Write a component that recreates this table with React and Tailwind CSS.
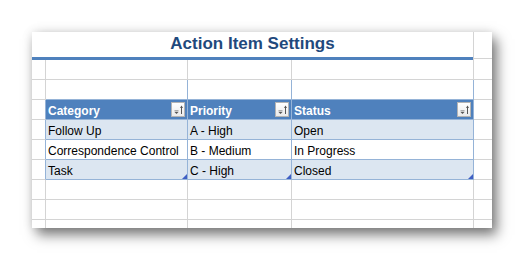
import React from "react";

const GRID = "border-[#d4d4d4]";
const TBL = "border-[#95b3d7]";

// column widths incl. right border: A, B, C, D, E
const COLS = ["w-[14px]", "w-[142px]", "w-[104px]", "w-[182px]", "w-[18px]"];

function SortButton() {
  return (
    <div className="absolute right-[2px] top-[2px] w-[14px] h-[15px] border border-[#b4b4b4] bg-gradient-to-b from-white to-[#ebebeb] flex items-center justify-center">
      <svg width="12" height="13" viewBox="0 0 12 13">
        <rect x="2.5" y="7.5" width="4" height="0.8" fill="#666" />
        <polygon points="2.5,9 6.5,9 4.5,11" fill="#555" />
        <line x1="9.5" y1="3.5" x2="9.5" y2="11" stroke="#555" strokeWidth="1" />
        <polygon points="8,5 11,5 9.5,2.5" fill="#555" />
      </svg>
    </div>
  );
}

function Handle() {
  return (
    <svg className="absolute right-0 bottom-0" width="5" height="5" viewBox="0 0 5 5">
      <polygon points="5,0 5,5 0,5" fill="#3f5fc4" />
    </svg>
  );
}

function BlankRow({ blueBottom = false, last = false }) {
  return (
    <div className={`flex ${last ? "h-[8px]" : "h-[20px]"}`}>
      {COLS.map((w, i) => (
        <div
          key={i}
          className={`${w} ${i < 4 ? "border-r" : ""} ${last ? "" : "border-b"} ${
            blueBottom && i > 0 && i < 4 ? TBL : GRID
          }`}
        />
      ))}
    </div>
  );
}

const rows = [
  ["Follow Up", "A - High", "Open"],
  ["Correspondence Control", "B - Medium", "In Progress"],
  ["Task", "C - High", "Closed"],
];

export default function App() {
  return (
    <div className="min-h-screen bg-white pt-[32px] pl-[32px]">
      <div className="w-[460px] h-[196px] bg-white overflow-hidden flex flex-col font-['Liberation_Sans',Arial,sans-serif] shadow-[5px_7px_12px_rgba(0,0,0,0.5),0_0_10px_rgba(0,0,0,0.12)]">
        {/* title row */}
        <div className="flex h-[25px]">
          <div className="w-[442px] border-r border-[#d4d4d4] flex items-end justify-center">
            <span className="text-[17px] font-bold text-[#1f497d] leading-none pb-[5px]">
              Action Item Settings
            </span>
          </div>
          <div className="w-[18px]" />
        </div>
        {/* thick blue rule */}
        <div className="flex h-[3px]">
          <div className="w-[441px] bg-[#4f81bd]" />
          <div className="w-[1px] bg-[#d4d4d4]" />
          <div className="w-[18px] flex flex-col">
            <div className="h-[1px]" />
            <div className="h-[1px] bg-[#d4d4d4]" />
          </div>
        </div>
        <BlankRow />
        <BlankRow blueBottom />
        {/* header */}
        <div className="flex h-[20px]">
          <div className={`${COLS[0]} border-r border-b ${TBL} border-b-[#d4d4d4]`} />
          {["Category", "Priority", "Status"].map((h, i) => (
            <div
              key={h}
              className={`${COLS[i + 1]} relative border-r border-b ${TBL} bg-[#4f81bd] text-white font-bold text-[12px] leading-none pl-[2px] pb-[2px] flex items-end`}
            >
              {h}
              <SortButton />
            </div>
          ))}
          <div className={`${COLS[4]} border-b ${GRID}`} />
        </div>
        {rows.map((r, ri) => (
          <div key={ri} className="flex h-[20px]">
            <div className={`${COLS[0]} border-r border-b ${TBL} border-b-[#d4d4d4]`} />
            {r.map((c, ci) => (
              <div
                key={ci}
                className={`${COLS[ci + 1]} relative border-r border-b ${TBL} ${
                  ri % 2 === 0 ? "bg-[#dce6f1]" : "bg-white"
                } text-black text-[12px] leading-none pl-[2px] pb-[2px] flex items-end`}
              >
                {c}
                {ri === rows.length - 1 && <Handle />}
              </div>
            ))}
            <div className={`${COLS[4]} border-b ${GRID}`} />
          </div>
        ))}
        <BlankRow />
        <BlankRow />
        <BlankRow last />
      </div>
    </div>
  );
}
